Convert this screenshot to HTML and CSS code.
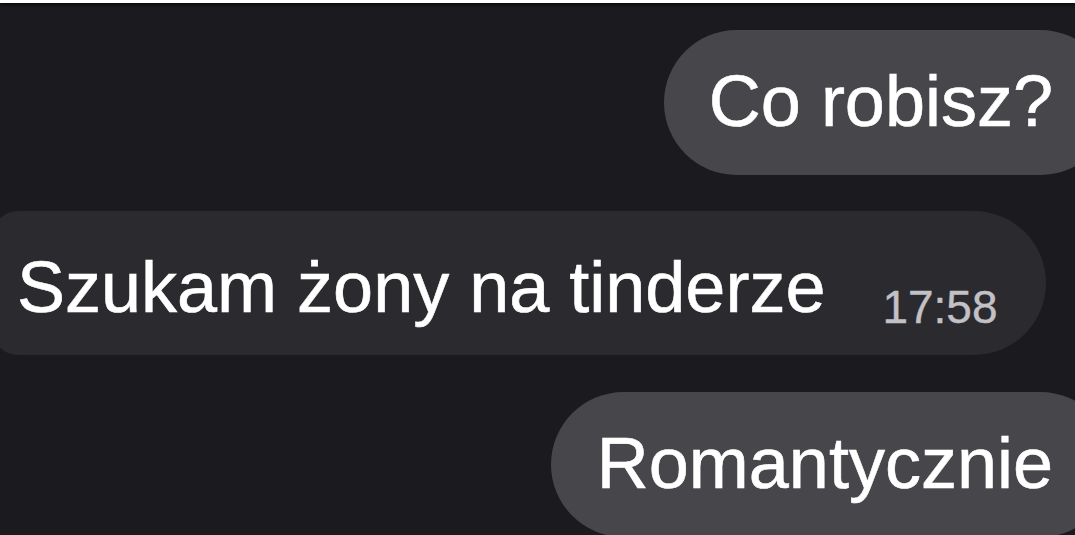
FILE: index.html
```html
<!doctype html>
<html>
<head>
  <meta charset="utf-8">
  <title>Chat</title>
  <link rel="stylesheet" href="styles.css">
</head>
<body>
  <div class="top-strip"></div>

  <div class="chat">
    <div class="bubble sent">Co robisz?</div>

    <div class="bubble received"><span class="text">Szukam żony na tinderze</span><span class="time">17:58</span></div>

    <div class="bubble sent third">Romantycznie</div>
  </div>
</body>
</html>
```

FILE: styles.css
```css
body {
  background-color: #1b1a1f;
  color: #ffffff;
  font-family: "Liberation Sans", Arial, sans-serif;
  margin: 0;
  height: 100vh;
  overflow: hidden;
}
.top-strip {
  height: 3px;
  background-color: #ffffff;
  box-shadow: 0 2px 3px #0b0a0d;
}

/* Message list */
.chat {
  display: flex;
  flex-direction: column;
  gap: 36px;
  padding-top: 27px;
}
.bubble {
  box-sizing: border-box;
  height: 145px;
  font-size: 72px;
  line-height: 143px;
  white-space: nowrap;
  -webkit-text-stroke: 0.6px #ffffff;
}
.sent {
  align-self: flex-end;
  background-color: #47464b;
  border-radius: 73px;
  padding: 0 60px 0 45px;
  margin-right: -38px;
}
.sent.third {
  padding-left: 46px;
  margin-top: 1px;
}
.received {
  align-self: flex-start;
  height: 144px;
  background-color: #2b2a2f;
  border-radius: 26px 72px 72px 26px;
  padding: 0 48px 0 25px;
  margin-left: -8px;
  line-height: 152px;
}
.time {
  display: inline-block;
  font-size: 46px;
  line-height: 1;
  color: #c2c1c5;
  margin-left: 57px;
  vertical-align: -11px;
  -webkit-text-stroke: 0.4px #c2c1c5;
}
```
